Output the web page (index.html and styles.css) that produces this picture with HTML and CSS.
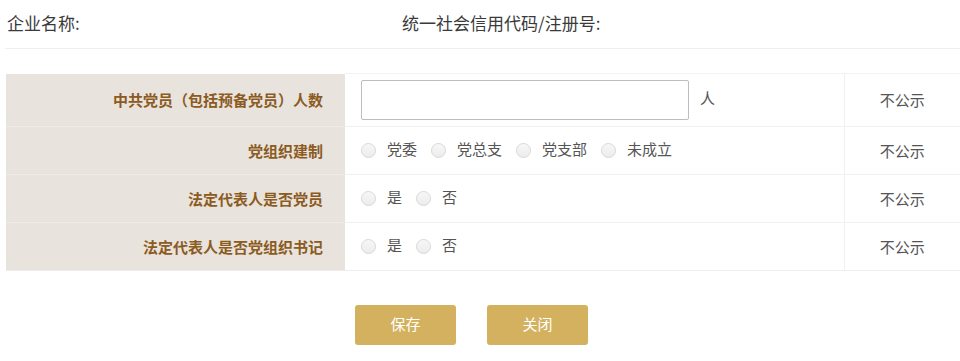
FILE: index.html
```html
<!DOCTYPE html>
<html lang="zh-CN">
<head>
<meta charset="utf-8">
<title>党建信息</title>
<link rel="stylesheet" href="styles.css">
</head>
<body>
<div class="header">
  <div class="h-name">企业名称:</div>
  <div class="h-code">统一社会信用代码/注册号:</div>
</div>
<table class="form">
  <tr class="row-first">
    <th>中共党员（包括预备党员）人数</th>
    <td class="content"><div class="inline"><input class="num" type="text"><span class="unit">人</span></div></td>
    <td class="pub">不公示</td>
  </tr>
  <tr>
    <th>党组织建制</th>
    <td class="content">
      <div class="inline">
        <label class="opt"><span class="radio"></span>党委</label>
        <label class="opt"><span class="radio"></span>党总支</label>
        <label class="opt"><span class="radio"></span>党支部</label>
        <label class="opt"><span class="radio"></span>未成立</label>
      </div>
    </td>
    <td class="pub">不公示</td>
  </tr>
  <tr>
    <th>法定代表人是否党员</th>
    <td class="content">
      <div class="inline">
        <label class="opt"><span class="radio"></span>是</label>
        <label class="opt"><span class="radio"></span>否</label>
      </div>
    </td>
    <td class="pub">不公示</td>
  </tr>
  <tr>
    <th>法定代表人是否党组织书记</th>
    <td class="content">
      <div class="inline">
        <label class="opt"><span class="radio"></span>是</label>
        <label class="opt"><span class="radio"></span>否</label>
      </div>
    </td>
    <td class="pub">不公示</td>
  </tr>
</table>
<div class="actions">
  <button class="btn" type="button">保存</button>
  <button class="btn" type="button">关闭</button>
</div>
</body>
</html>
```

FILE: styles.css
```css
html, body {
  margin: 0;
  padding: 0;
  background: #ffffff;
}
body {
  width: 960px;
  height: 361px;
  overflow: hidden;
  font-family: "Noto Sans CJK SC", "Noto Sans", sans-serif;
  color: #444;
}
.header {
  display: flex;
  align-items: center;
  height: 48px;
  margin-left: 5px;
  border-bottom: 1px solid #efefef;
  font-size: 17px;
  color: #3a3a3a;
}
.h-name {
  width: 395px;
  padding-left: 2px;
  padding-bottom: 4px;
}
.h-code {
  padding-bottom: 4px;
}
.form {
  margin: 24px 0 0 6px;
  width: 954px;
  border-collapse: collapse;
  table-layout: fixed;
}
.form th,
.form td {
  line-height: 20px;
  padding: 0;
  height: 48px;
  box-sizing: border-box;
}
.form th {
  width: 339px;
  background: #e9e3dd;
  color: #8b5b1f;
  font-weight: bold;
  font-size: 15px;
  text-align: right;
  padding-right: 22px;
  border-bottom: 1px solid #efebe7;
}
.form td {
  border-bottom: 1px solid #f0f0f0;
}
.form tr:last-child th,
.form tr:last-child td {
  border-bottom: 1px solid #eeeeee;
}
.form .row-first th,
.form .row-first td {
  height: 53px;
}
.form .row-first td {
  border-top: 1px solid #f2f2f2;
}
.content {
  width: 499px;
  padding-left: 16px !important;
}
.pub {
  width: 116px;
  text-align: center;
  font-size: 15px;
  color: #555;
  border-left: 1px solid #f0f0f0;
}
.inline {
  display: flex;
  align-items: center;
  font-size: 15px;
  color: #555;
}
.num {
  width: 328px;
  height: 40px;
  box-sizing: border-box;
  border: 1px solid #bdbdbd;
  border-radius: 2px;
  margin: 0;
  padding: 0 8px;
  font: inherit;
}
.unit {
  margin-left: 11px;
  margin-bottom: 4px;
}
.opt {
  display: flex;
  align-items: center;
  margin-right: 14px;
  margin-bottom: 4px;
}
.radio {
  width: 13px;
  height: 13px;
  border: 1px solid #d9d9d9;
  border-radius: 50%;
  background: linear-gradient(#f7f7f7, #ececec);
  margin-right: 11px;
  margin-top: 3px;
}
.actions {
  display: flex;
  justify-content: center;
  gap: 31px;
  margin-top: 34px;
  padding-right: 17px;
}
.btn {
  width: 101px;
  height: 40px;
  border: none;
  border-radius: 3px;
  background: #d4b15e;
  color: #fff;
  font-family: "Noto Sans CJK SC", sans-serif;
  font-size: 15px;
  padding: 0 0 3px 0;
}
```
